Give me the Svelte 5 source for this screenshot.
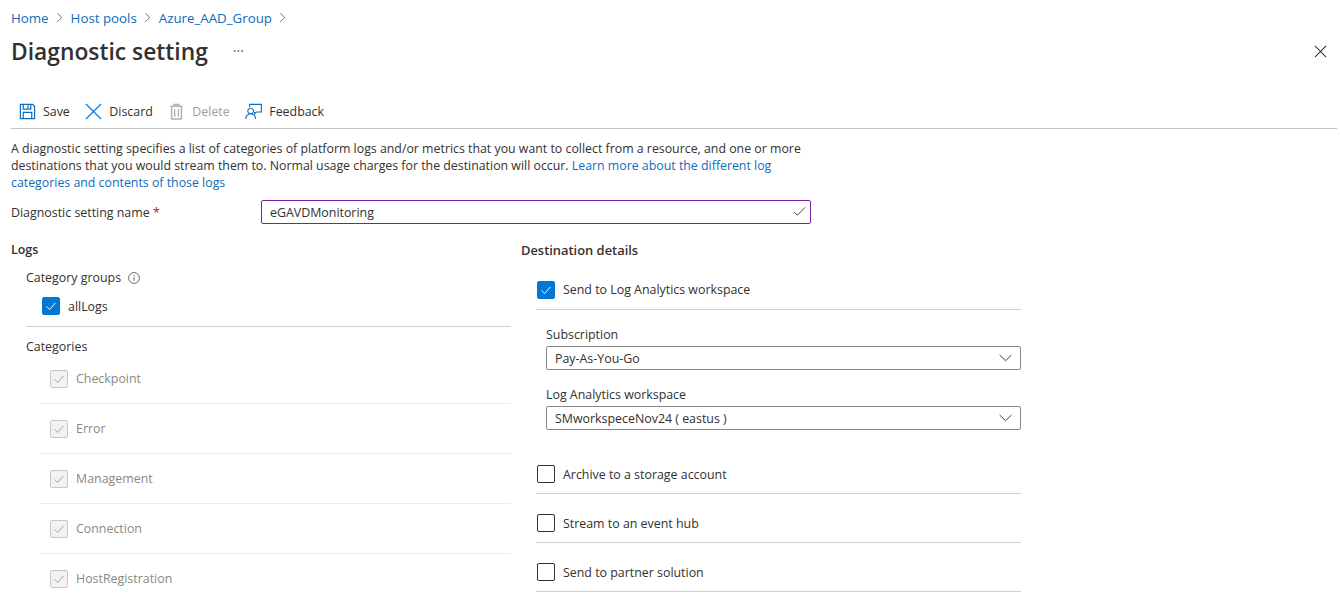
<script lang="ts">
    const crumbs = ["Home", "Host pools", "Azure_AAD_Group"];
    const categories = ["Checkpoint", "Error", "Management", "Connection", "HostRegistration"];
    const destinations = ["Archive to a storage account", "Stream to an event hub", "Send to partner solution"];
</script>

{#snippet tick()}
    <svg viewBox="0 0 18 18" class="tick"><path d="M4 9.500l3.400 3.400L14 5.600" fill="none" stroke="currentColor" stroke-width="1.100" /></svg>
{/snippet}

{#snippet chevron()}
    <svg viewBox="0 0 14 8" class="chevron"><path d="M.7.800L7 7l6.300-6.200" fill="none" stroke="#323130" stroke-width="1" /></svg>
{/snippet}

<div class="page">
    <nav class="crumbs">
        {#each crumbs as crumb}
            <a href="#top">{crumb}</a>
            <svg viewBox="0 0 8 12" class="sep"><path d="M1.500 1L6.500 6l-5 5" fill="none" stroke="#605e5c" stroke-width="1" /></svg>
        {/each}
    </nav>

    <header class="title-row">
        <h1>Diagnostic setting</h1>
        <span class="more">···</span>
        <svg viewBox="0 0 14 14" class="close"><path d="M1 1l12 12M13 1L1 13" fill="none" stroke="#323130" stroke-width="1.100" /></svg>
    </header>

    <div class="toolbar">
        <span class="tool">
            <svg viewBox="0 0 18 18" class="tool-icon"><path d="M1.500 1.500h13l2 2v13h-15zM4.500 1.500v5h8v-5M4.500 16.500v-6.500h9v6.500M9.500 2.500v3" fill="none" stroke="#0f6cbd" stroke-width="1.300" /></svg>
            Save
        </span>
        <span class="tool">
            <svg viewBox="0 0 18 18" class="tool-icon"><path d="M1 1l16 16M17 1L1 17" fill="none" stroke="#0f78d4" stroke-width="1.300" /></svg>
            Discard
        </span>
        <span class="tool disabled">
            <svg viewBox="0 0 18 18" class="tool-icon"><path d="M2.500 3.500h13M6.500 3.500v-2h5v2M3.800 3.500v13.500h10.400v-13.500M7 6.500v8M11 6.500v8" fill="none" stroke="#b3b0ad" stroke-width="1.500" /></svg>
            Delete
        </span>
        <span class="tool">
            <svg viewBox="0 0 18 18" class="tool-icon"><path d="M5 4.500v-3h12.300v8h-5l-2 2v-2M6 5.500a3 3 0 1 1-.01 0M.8 17c0-3.500 2.400-5.500 5.200-5.500s5.200 2 5.200 5.500" fill="none" stroke="#0f6cbd" stroke-width="1.200" /></svg>
            Feedback
        </span>
    </div>

    <p class="intro">
        A diagnostic setting specifies a list of categories of platform logs and/or metrics that you want to collect from a resource, and one or more destinations that you would stream them to. Normal usage charges for the destination will occur.
        <a href="#top">Learn more about the different log categories and contents of those logs</a>
    </p>

    <div class="name-row">
        <label for="setting-name">Diagnostic setting name <span class="req">*</span></label>
        <div class="name-input">
            <input id="setting-name" value="eGAVDMonitoring" />
            <svg viewBox="0 0 14 12" class="name-tick"><path d="M1 6.500l3.600 3.600L13 1.500" fill="none" stroke="#323130" stroke-width="1" /></svg>
        </div>
    </div>

    <div class="columns">
        <section class="logs">
            <h2>Logs</h2>
            <div class="group-label">
                Category groups
                <svg viewBox="0 0 12 12" class="info"><circle cx="6" cy="6" r="5.400" fill="none" stroke="#605e5c" stroke-width=".9" /><path d="M6 5.200v3.600M6 3v1.100" stroke="#605e5c" stroke-width="1" /></svg>
            </div>
            <div class="all-logs">
                <span class="box on">{@render tick()}</span>
                allLogs
            </div>
            <div class="cat-label">Categories</div>
            {#each categories as category}
                <div class="cat-row">
                    <span class="box muted">{@render tick()}</span>
                    {category}
                </div>
            {/each}
        </section>

        <section class="dest">
            <h2>Destination details</h2>
            <div class="dest-row first">
                <span class="box on">{@render tick()}</span>
                Send to Log Analytics workspace
            </div>
            <div class="fields">
                <div class="field-label">Subscription</div>
                <div class="select">Pay-As-You-Go {@render chevron()}</div>
                <div class="field-label second">Log Analytics workspace</div>
                <div class="select">SMworkspeceNov24 ( eastus ) {@render chevron()}</div>
            </div>
            {#each destinations as dest}
                <div class="dest-row">
                    <span class="box"></span>
                    {dest}
                </div>
            {/each}
        </section>
    </div>
</div>

<style>
    :global(body) {
        background: #fff;
        overflow: hidden;
    }

    .page {
        height: 596px;
        overflow: hidden;
        box-sizing: border-box;
        padding: 9px 3px 0 11px;
        font-family: "Open Sans", "Noto Sans", sans-serif;
        font-size: 12.4px;
        color: #323130;
    }

    a {
        color: #0f6cbd;
        text-decoration: none;
    }

    .crumbs {
        display: flex;
        align-items: center;
        height: 17px;
        font-size: 13.3px;
    }

    .sep {
        width: 7px;
        height: 11px;
        margin: 0 7.500px;
    }

    .title-row {
        display: flex;
        align-items: center;
        height: 34px;
        margin-top: 8px;
    }

    h1 {
        margin: 0;
        font-size: 22.800px;
        font-weight: 600;
        color: #323130;
    }

    .more {
        margin-left: 25px;
        font-size: 14px;
        line-height: 1;
        color: #605e5c;
    }

    .close {
        width: 13px;
        height: 13px;
        margin-left: auto;
        margin-right: 10px;
    }

    .toolbar {
        display: flex;
        align-items: center;
        gap: 15.500px;
        height: 34px;
        margin-top: 26px;
        padding-left: 8px;
        border-bottom: 1px solid #c8c6c4;
    }

    .tool {
        display: flex;
        align-items: center;
        gap: 7px;
    }

    .tool-icon {
        width: 17px;
        height: 17px;
    }

    .disabled {
        color: #a19f9d;
    }

    .intro {
        width: 800px;
        margin: 11px 0 0;
        font-size: 12.350px;
        line-height: 17px;
    }

    .name-row {
        display: flex;
        align-items: center;
        margin-top: 9px;
    }

    .name-row label {
        width: 250px;
    }

    .req {
        color: #a4262c;
    }

    .name-input {
        position: relative;
        width: 550px;
        height: 24px;
    }

    .name-input input {
        width: 100%;
        height: 100%;
        box-sizing: border-box;
        padding: 0 8px;
        border: 1px solid #7a1fa2;
        border-radius: 2px;
        outline: none;
        font: inherit;
        color: #323130;
    }

    .name-tick {
        position: absolute;
        right: 5px;
        top: 6px;
        width: 13px;
        height: 11px;
    }

    .columns {
        display: flex;
        margin-top: 17px;
    }

    h2 {
        margin: 0;
        font-size: 12.400px;
        font-weight: 600;
        line-height: 17px;
    }

    .logs {
        width: 500px;
        margin-right: 10px;
    }

    .group-label {
        display: flex;
        align-items: center;
        gap: 7px;
        margin: 11px 0 0 15px;
        line-height: 17px;
    }

    .info {
        width: 12px;
        height: 12px;
    }

    .box {
        display: inline-flex;
        flex: none;
        box-sizing: border-box;
        width: 18px;
        height: 18px;
        border: 1px solid #323130;
        border-radius: 2px;
    }

    .tick {
        width: 100%;
        height: 100%;
    }

    .box.on {
        background: #0078d4;
        border-color: #0078d4;
        color: #fff;
    }

    .box.muted {
        background: #f3f2f1;
        border-color: #c8c6c4;
        color: #a19f9d;
    }

    .all-logs {
        display: flex;
        align-items: center;
        gap: 8px;
        margin: 11px 0 0 15px;
        padding: 0 0 11px 16px;
        border-bottom: 1px solid #d2d0ce;
    }

    .cat-label {
        margin: 11px 0 -1px 15px;
        line-height: 17px;
    }

    .cat-row {
        display: flex;
        align-items: center;
        gap: 8px;
        height: 49px;
        margin-left: 29px;
        padding-left: 10px;
        border-bottom: 1px solid #edebe9;
        color: #8a8886;
    }

    .dest h2 {
        margin-top: 1px;
        font-size: 12.900px;
    }

    .dest {
        width: 500px;
    }

    .dest-row {
        display: flex;
        align-items: center;
        gap: 8px;
        box-sizing: border-box;
        width: 485px;
        height: 49px;
        margin-left: 15px;
        padding: 10px 0 0 1px;
        border-bottom: 1px solid #d2d0ce;
    }

    .dest-row.first {
        height: 51px;
        padding-top: 11px;
    }

    .fields {
        margin: 16px 0 0 25px;
        width: 475px;
        padding-bottom: 15px;
    }

    .field-label {
        line-height: 17px;
        margin-bottom: 3px;
    }

    .field-label.second {
        margin-top: 16px;
    }

    .select {
        display: flex;
        align-items: center;
        justify-content: space-between;
        box-sizing: border-box;
        height: 24px;
        padding: 0 8px;
        border: 1px solid #8a8886;
        border-radius: 2px;
    }

    .chevron {
        width: 13px;
        height: 8px;
    }
</style>
